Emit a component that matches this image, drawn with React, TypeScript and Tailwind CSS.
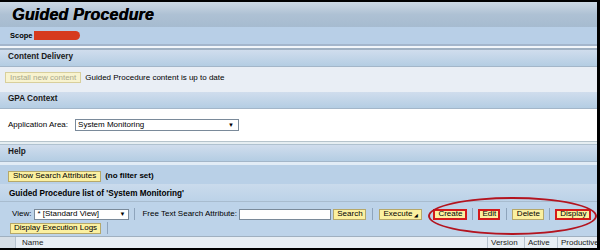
import React from 'react';

const font = { fontFamily: '"Liberation Sans", Arial, sans-serif' };

function Btn({ label, red, w, className = '' }: { label: React.ReactNode; red?: boolean; w?: string; className?: string }) {
  return (
    <span
      className={`inline-flex h-[11px] shrink-0 items-center justify-center whitespace-nowrap bg-[#fbf0a0] text-[8px] leading-none text-black ${
        red ? 'border-2 border-[#d41a1a]' : 'border border-[#b6a86a]'
      } ${w ?? 'px-[4px]'} ${className}`}
    >
      {label}
    </span>
  );
}

function Sep({ className = '' }: { className?: string }) {
  return <span className={`inline-block h-[12px] w-px shrink-0 bg-[#8ea4bc] ${className}`} />;
}

function Header({ title }: { title: string }) {
  return (
    <div className="h-[17px] whitespace-nowrap border-b border-[#a3b6c9] bg-gradient-to-b from-[#d0dded] to-[#b4cde3] pl-[8px] pt-[1px] text-[8.2px] font-bold leading-[11px] text-[#1a1a1a]">
      {title}
    </div>
  );
}

export default function App() {
  return (
    <div style={font} className="relative h-[250px] w-[600px] overflow-hidden border-t-2 border-r-[3px] border-b-2 border-black bg-[#e9eef5]">
      {/* title */}
      <div className="flex h-[25px] items-center bg-gradient-to-b from-[#ccd8e4] via-[#aec1d4] to-[#a6bbd0] pl-[12px]">
        <span className="text-[16px] font-bold italic leading-none tracking-[0.2px] text-black [text-shadow:0.5px_0_0_#000]">
          Guided Procedure
        </span>
      </div>
      {/* scope */}
      <div className="flex h-[17px] items-center bg-[#b8cfe7] pl-[10px] text-[7.5px] font-bold">
        Scope
        <span className="ml-[1px] inline-block h-[9px] w-[46px] rounded-l-[3px] rounded-r-full bg-[#d63a1e]" />
      </div>
      <div className="h-[2px] bg-[#a4b6cc]" />
      <div className="h-[2px] bg-[#f2f6fa]" />
      <div className="h-[2px] bg-[#9fb0c2]" />

      <Header title="Content Delivery" />
      <div className="flex h-[25px] items-start whitespace-nowrap pl-[5px] pt-[5px] text-[8px] text-black">
        <span className="inline-flex h-[11px] items-center border border-[#d8cf9c] bg-[#f8f3cf] px-[4px] leading-none text-[#a9a98c]">
          Install new content
        </span>
        <span className="ml-[4px] leading-[11px]">Guided Procedure content is up to date</span>
      </div>

      <Header title="GPA Context" />
      <div className="flex h-[32px] items-center whitespace-nowrap bg-white pl-[8px] text-[8px]">
        <span>Application Area:</span>
        <span className="ml-[7px] flex h-[12px] w-[164px] items-center justify-between border border-[#7a8a9a] bg-white pl-[2px] pr-[4px]">
          System Monitoring
          <span className="text-[6px]">▼</span>
        </span>
      </div>
      <div className="h-[1px] bg-[#b6c4cc]" />
      <div className="h-[2px] bg-[#e6eef2]" />
      <div className="h-[1px] bg-[#b0c2d0]" />

      <Header title="Help" />
      <div className="h-[3px] bg-[#e2ecf6]" />
      <div className="flex h-[19px] items-center whitespace-nowrap bg-[#b9d0e7] pl-[8px] pt-[3px] text-[8px]">
        <Btn label="Show Search Attributes" />
        <span className="ml-[4px] font-bold">(no filter set)</span>
      </div>

      <div className="h-[18px] whitespace-nowrap border-b border-[#a8bccf] bg-gradient-to-b from-[#cadbec] to-[#bcd2e8] pl-[9px] pt-[4px] text-[8.2px] font-bold leading-[11px]">
        Guided Procedure list of 'System Monitoring'
      </div>
      {/* toolbar */}
      <div className="h-[34px] whitespace-nowrap bg-[#bdd3e9] pl-[10px] pt-[6px] text-[8px]">
        <div className="flex h-[12px] items-center">
          <span className="ml-[2px]">View:</span>
          <span className="ml-[3px] flex h-[11px] w-[95px] items-center justify-between border border-[#7a8a9a] bg-white pl-[2px] pr-[3px]">
            * [Standard View]
            <span className="text-[6px]">▼</span>
          </span>
          <Sep className="ml-[5px]" />
          <span className="ml-[7px] w-[97px]">Free Text Search Attribute:</span>
          <span className="h-[11px] w-[92px] shrink-0 border border-[#7a8a9a] bg-white" />
          <Btn label="Search" w="w-[33px]" className="ml-[2px]" />
          <Sep className="ml-[6px]" />
          <Btn
            label={
              <>
                Execute<span className="ml-[2px] mt-[3px] text-[5px]">◢</span>
              </>
            }
            w="w-[43px]"
            className="ml-[6px]"
          />
          <Btn label="Create" red w="w-[34px]" className="ml-[11px]" />
          <Sep className="ml-[5px]" />
          <Btn label="Edit" red w="w-[22px]" className="ml-[5px]" />
          <Sep className="ml-[6px]" />
          <Btn label="Delete" w="w-[32px]" className="ml-[5px]" />
          <Sep className="ml-[5px]" />
          <Btn label="Display" red w="w-[36px]" className="ml-[5px]" />
        </div>
        <div className="mt-[2px] flex h-[12px] items-center">
          <Btn label="Display Execution Logs" w="w-[91px]" />
          <Sep className="ml-[6px]" />
        </div>
      </div>
      {/* table header */}
      <div className="flex h-[12px] whitespace-nowrap border-t border-[#a0b0c0] bg-[#e8eef4] text-[8px] leading-[11px] text-[#222]">
        <div className="w-[16px] border-r border-[#b6c2ce] bg-[#d6dee6]" />
        <div className="flex-1 pl-[6px]">Name</div>
        <div className="w-[37px] border-l border-[#b6c2ce] pl-[3px]">Version</div>
        <div className="w-[33px] border-l border-[#b6c2ce] pl-[3px]">Active</div>
        <div className="w-[40px] overflow-hidden border-l border-[#b6c2ce] pl-[3px]">Productive</div>
      </div>

      {/* annotation ellipse */}
      <div className="absolute left-[428px] top-[195px] h-[38px] w-[169px] rounded-[50%] border-2 border-[#b3141f]" />
    </div>
  );
}
